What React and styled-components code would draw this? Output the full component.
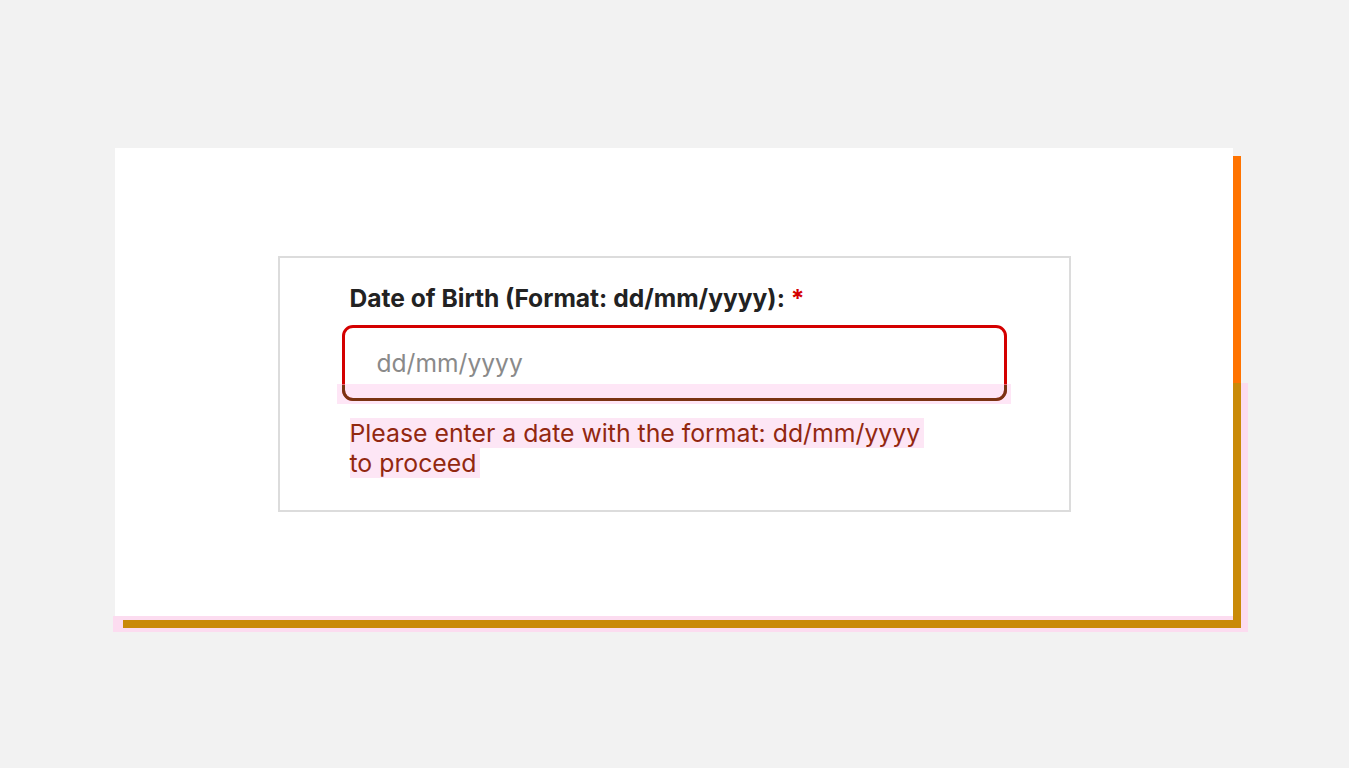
import React from "react";
import styled, { createGlobalStyle } from "styled-components";

const Global = createGlobalStyle`
  html, body { margin: 0; padding: 0; background: #f2f2f2; }
  body { font-family: Inter, "Noto Sans", "Liberation Sans", sans-serif; }
  * { box-sizing: border-box; }
`;

const Page = styled.div`
  min-height: 100vh;
  display: flex;
  align-items: center;
  justify-content: center;
`;

const Card = styled.div`
  position: relative;
  width: 1118px;
  height: 472px;
  margin-right: 1px;
  background: #ffffff;
  display: flex;
  align-items: center;
  justify-content: center;
`;

/* decorative offset shadow strips and highlight halos drawn over the card edge */
const Strip = styled.div`
  position: absolute;
  background: ${(p) => p.$color};
  pointer-events: none;
`;

const HaloRight = styled(Strip)`
  left: 100%;
  top: 235px;
  width: 15px;
  height: 249px;
`;

const HaloBottom = styled(Strip)`
  left: -2px;
  top: 468px;
  width: 1135px;
  height: 16px;
`;

const ShadowRightTop = styled(Strip)`
  left: 100%;
  top: 8px;
  width: 8px;
  height: 227px;
`;

const ShadowRightBottom = styled(Strip)`
  left: 100%;
  top: 235px;
  width: 8px;
  height: 245px;
`;

const ShadowBottom = styled(Strip)`
  left: 8px;
  top: 472px;
  width: 1118px;
  height: 8px;
`;

const FieldBox = styled.div`
  width: 793px;
  border: 2px solid #dcdcdc;
  padding: 25px 62px 32px;
  display: flex;
  flex-direction: column;
`;

const Label = styled.label`
  padding-left: 8px;
  font-size: 24.6px;
  line-height: 30px;
  font-weight: 700;
  color: #222222;
`;

const Required = styled.span`
  color: #d40000;
`;

const InputWrap = styled.div`
  position: relative;
  margin-top: 12px;
`;

const Input = styled.input`
  display: block;
  width: 100%;
  height: 76px;
  border: 3px solid #d40000;
  border-radius: 11px;
  padding: 0 32px;
  font-family: inherit;
  font-size: 24.6px;
  color: #222;
  background: #fff;
  outline: none;
  &::placeholder { color: #8a8a8a; }
`;

const InputHalo = styled.div`
  position: absolute;
  left: -5px;
  right: -4px;
  bottom: -3px;
  height: 20px;
  background: rgba(252, 200, 236, 0.45);
  pointer-events: none;
`;

const InputEdge = styled.div`
  position: absolute;
  left: 0;
  right: 0;
  bottom: 0;
  height: 16px;
  border: 3px solid #7a3312;
  border-top: none;
  border-radius: 0 0 11px 11px;
  pointer-events: none;
`;

const Error = styled.p`
  margin: 17px 0 0;
  padding-left: 8px;
  max-width: 604px;
  font-size: 24.8px;
  line-height: 30px;
  color: #922810;
`;

const Mark = styled.span`
  background: #fde6f5;
  padding-right: 4px;
  -webkit-box-decoration-break: clone;
  box-decoration-break: clone;
`;

export default function App() {
  return (
    <>
      <Global />
      <Page>
        <Card>
          <HaloRight $color="#fcdcf0" />
          <HaloBottom $color="#fcdcf0" />
          <ShadowRightTop $color="#ff7300" />
          <ShadowRightBottom $color="#c98a08" />
          <ShadowBottom $color="#c98a08" />
          <FieldBox>
            <Label htmlFor="dob">
              Date of Birth (Format: dd/mm/yyyy): <Required>*</Required>
            </Label>
            <InputWrap>
              <Input id="dob" placeholder="dd/mm/yyyy" />
              <InputHalo />
              <InputEdge />
            </InputWrap>
            <Error>
              <Mark>Please enter a date with the format: dd/mm/yyyy to proceed</Mark>
            </Error>
          </FieldBox>
        </Card>
      </Page>
    </>
  );
}
